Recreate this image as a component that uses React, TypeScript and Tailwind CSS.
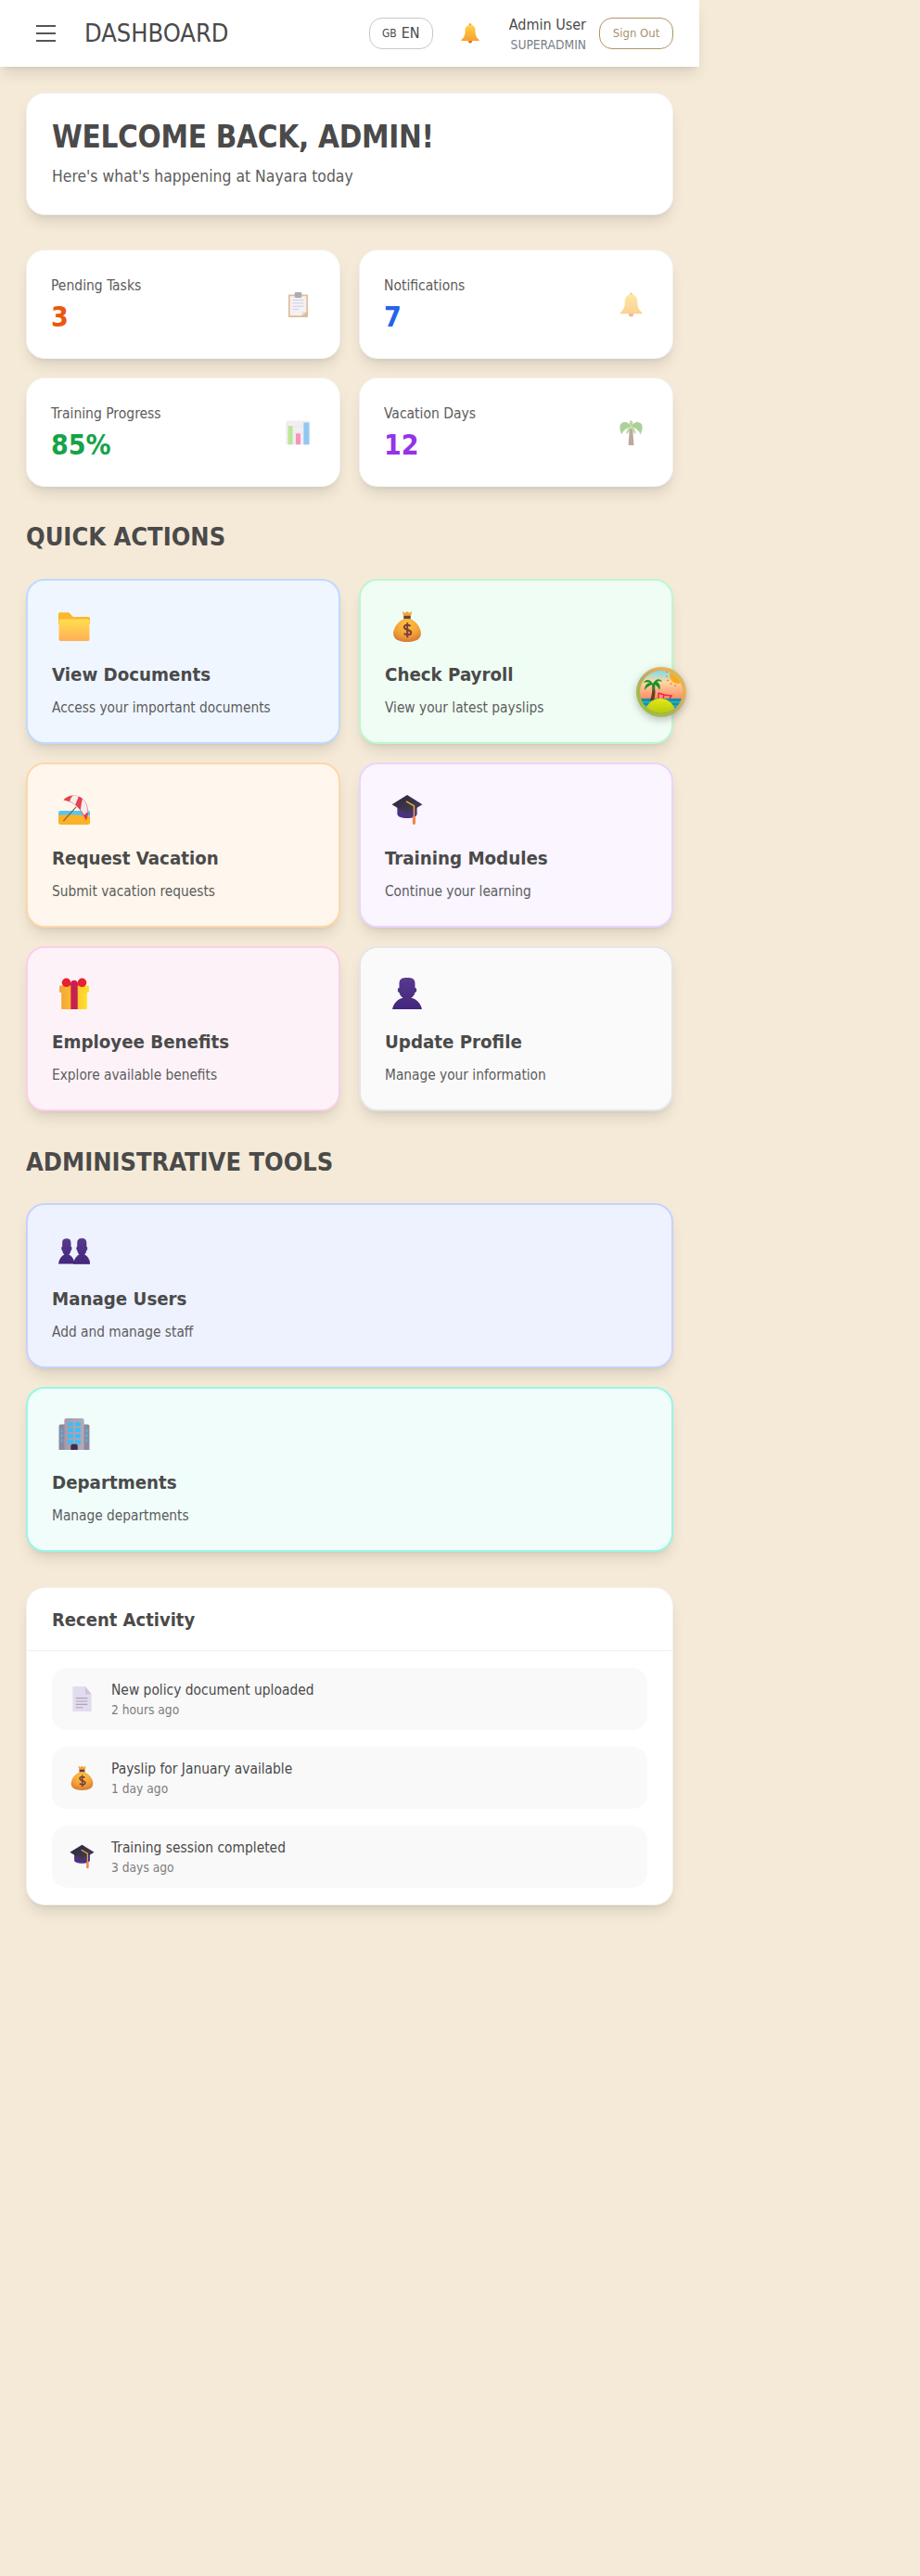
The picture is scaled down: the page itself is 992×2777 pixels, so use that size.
import { ReactNode } from "react";

const Folder = ({ className }: { className: string }) => (
  <svg viewBox="0 0 32 32" className={className}>
    <defs>
      <linearGradient id="folderFront" x1="0" y1="0" x2="0" y2="1">
        <stop offset="0" stopColor="#ffdf4f" />
        <stop offset="1" stopColor="#ffae55" />
      </linearGradient>
    </defs>
    <path d="M0 3.500a1.500 1.500 0 0 1 1.500-1.500h9l4.500 4.500h15.500a1.500 1.500 0 0 1 1.500 1.500v6H0z" fill="#ffb52f" />
    <rect x="0.500" y="9" width="31" height="22" rx="1.500" fill="url(#folderFront)" />
  </svg>
);

const MoneyBag = ({ className }: { className: string }) => (
  <svg viewBox="0 0 32 32" className={className}>
    <defs>
      <radialGradient id="bagFill" cx="0.5" cy="0.25" r="0.85">
        <stop offset="0" stopColor="#ffc53f" />
        <stop offset="0.55" stopColor="#f2a038" />
        <stop offset="1" stopColor="#d06c34" />
      </radialGradient>
    </defs>
    <path d="M11 1l3 1.500 2-1.500 2 1.500 3-1.500-1.500 5h-7z" fill="#f3a33a" />
    <rect x="12.500" y="5.500" width="7" height="3.500" fill="#6b4136" />
    <path d="M13 8.500h6c6 2.500 11 9 11 15 0 6-6 8.500-14 8.500S2 29.500 2 23.500c0-6 5-12.500 11-15z" fill="url(#bagFill)" />
    <path d="M19.500 16c-1-1.500-6.500-2-6.500 1 0 3.500 7 2 7 5.500 0 3-6 2.500-7 .8M16.200 12.500v15" fill="none" stroke="#7a3f3c" strokeWidth="1.900" />
  </svg>
);

const Umbrella = ({ className }: { className: string }) => (
  <svg viewBox="0 0 32 32" className={className}>
    <path d="M0 19a2 2 0 0 1 2-2h28a2 2 0 0 1 2 2v3H0z" fill="#5cc4ee" />
    <path d="M0 21.500c10-.5 22-.5 32 1V29a2 2 0 0 1-2 2H2a2 2 0 0 1-2-2z" fill="#fbb226" />
    <path d="M5 27.500L18 13" stroke="#7a5a4c" strokeWidth="1" />
    <path d="M5 6C10 0 20 0 25 5c5 5 7 14 3 22-3-7-6-12-11-16C13 8 9 7 5 6z" fill="#e8414f" />
    <path d="M11.500 7.500C12 5 13.500 2.500 15.500 1.500c2 .1 3.500.5 5 1.200L17 11c-1.800-1.500-3.500-2.700-5.500-3.500z" fill="#f6eeee" />
    <path d="M22.500 16c.5-4 1-8 2-11.500 3 3 5 8 5.300 13.500l-3.800 3.500c-1-2-2.300-4-3.500-5.500z" fill="#f6eeee" />
  </svg>
);

const GradCap = ({ className }: { className: string }) => (
  <svg viewBox="0 0 32 32" className={className}>
    <defs>
      <linearGradient id="capTop" x1="0" y1="0" x2="1" y2="1">
        <stop offset="0" stopColor="#2b2438" />
        <stop offset="1" stopColor="#4a4258" />
      </linearGradient>
    </defs>
    <path d="M6 13v7c0 3 4 4.500 10 4.500s10-1.500 10-4.500v-7z" fill="#4b3280" />
    <path d="M16 1L31.500 10.500 16 20 .5 10.500z" fill="url(#capTop)" />
    <path d="M15 7.500l8 4.500v11" fill="none" stroke="#e9a83f" strokeWidth="1.400" />
    <rect x="21.500" y="22" width="3" height="9" rx="1.500" fill="#f2854c" />
  </svg>
);

const Gift = ({ className }: { className: string }) => (
  <svg viewBox="0 0 32 32" className={className}>
    <defs>
      <linearGradient id="giftBox" x1="0" y1="0" x2="1" y2="0">
        <stop offset="0" stopColor="#f4a536" />
        <stop offset="1" stopColor="#ffe02b" />
      </linearGradient>
    </defs>
    <rect x="3" y="13" width="26" height="19" rx="1" fill="url(#giftBox)" />
    <rect x="1" y="8" width="30" height="7" rx="1" fill="url(#giftBox)" />
    <circle cx="8" cy="5" r="4.500" fill="#e8212f" />
    <circle cx="24" cy="5" r="4.500" fill="#e8212f" />
    <rect x="8" y="5" width="16" height="3" fill="#e8212f" />
    <path d="M12.500 6a3.500 3.500 0 0 1 7 0V32h-7z" fill="#c8204f" />
  </svg>
);

const bustPath = "M16 0C21 0 24 1 24 6V10L25.500 11V14L24 15C23 19 20 20.500 20 20.500C25 21 30 26 31 32H1C2 26 7 21 12 20.500C12 20.500 9 19 8 15L6.500 14V11L8 10V6C8 1 11 0 16 0Z";

const Bust = ({ className }: { className: string }) => (
  <svg viewBox="0 0 32 32" className={className}>
    <defs>
      <linearGradient id="bustFill" x1="0" y1="0" x2="0" y2="1">
        <stop offset="0" stopColor="#573a8c" />
        <stop offset="1" stopColor="#43267d" />
      </linearGradient>
    </defs>
    <path d={bustPath} fill="url(#bustFill)" />
  </svg>
);

const Busts = ({ className }: { className: string }) => (
  <svg viewBox="0 0 32 32" className={className}>
    <defs>
      <linearGradient id="bustsFill" x1="0" y1="0" x2="0" y2="1">
        <stop offset="0" stopColor="#573a8c" />
        <stop offset="1" stopColor="#43267d" />
      </linearGradient>
    </defs>
    <path d={bustPath} fill="url(#bustsFill)" transform="translate(-.5 4) scale(.55 .8)" />
    <path d={bustPath} fill="url(#bustsFill)" stroke="#351b68" strokeWidth=".8" transform="translate(15 4) scale(.55 .8)" />
  </svg>
);

const Building = ({ className }: { className: string }) => {
  const rows = [4, 10, 16, 22];
  const sideRows = [11, 16, 21];
  return (
    <svg viewBox="0 0 32 32" className={className}>
      <defs>
        <linearGradient id="towerFill" x1="0" y1="0" x2="1" y2="0">
          <stop offset="0" stopColor="#a49cad" />
          <stop offset="1" stopColor="#b1aab8" />
        </linearGradient>
      </defs>
      <path d="M.5 8a2 2 0 0 1 2-2H29.500a2 2 0 0 1 2 2v24H.5z" fill="#8f8898" />
      <path d="M6 2a2 2 0 0 1 2-2h16a2 2 0 0 1 2 2v30H6z" fill="url(#towerFill)" />
      {rows.map((y) => (
        <g key={y} fill="#3cbdf8">
          <rect x="9.500" y={y} width="5.500" height="4" />
          <rect x="17" y={y} width="5.500" height="4" />
        </g>
      ))}
      {sideRows.map((y) => (
        <g key={y} fill="#3cbdf8">
          <rect x="2.300" y={y} width="2" height="3" />
          <rect x="27.700" y={y} width="2" height="3" />
        </g>
      ))}
      <path d="M12.500 28a2 2 0 0 1 2-2h3a2 2 0 0 1 2 2v4h-7z" fill="#3d2d4f" />
    </svg>
  );
};

const Clipboard = ({ className }: { className: string }) => (
  <svg viewBox="0 0 32 32" className={className}>
    <rect x="3.500" y="3" width="25" height="29" rx="1" fill="#c77b30" />
    <path d="M5.500 5h21v20l-6 5h-15z" fill="#e9e5f1" />
    <path d="M20.500 30l6-5h-6z" fill="#c9c0d2" />
    <rect x="11.500" y="0" width="9" height="7" rx="1.500" fill="#5f5a66" />
    <path d="M9 10h14M9 14h14M9 18h14M9 22h8" stroke="#a8a2ae" strokeWidth="1.200" />
  </svg>
);

const Bell = ({ className }: { className: string }) => (
  <svg viewBox="0 0 32 32" className={className}>
    <defs>
      <linearGradient id="bellFill" x1="0" y1="0" x2="0" y2="1">
        <stop offset="0" stopColor="#fed24a" />
        <stop offset="1" stopColor="#f9a12e" />
      </linearGradient>
    </defs>
    <circle cx="16" cy="2.500" r="2" fill="#eda32c" />
    <circle cx="16" cy="28.500" r="3" fill="#e9702d" />
    <path d="M16 3c6 0 8 4 8 10 0 6 2 10 6 13v1.500H2V26c4-3 6-7 6-13C8 7 10 3 16 3z" fill="url(#bellFill)" />
  </svg>
);

const Chart = ({ className }: { className: string }) => (
  <svg viewBox="0 0 32 32" className={className}>
    <rect x="0.500" y="0.500" width="31" height="31" rx="2" fill="#e2dfe6" />
    <path d="M.5 8h31M.5 16h31M.5 24h31" stroke="#cfcbd4" strokeWidth=".6" />
    <rect x="3" y="7" width="6" height="24" rx="1" fill="#7ccf35" />
    <rect x="13" y="17" width="6" height="14" rx="1" fill="#ee2c78" />
    <rect x="23" y="3" width="7" height="28" rx="1" fill="#1f92e8" />
  </svg>
);

const Palm = ({ className }: { className: string }) => (
  <svg viewBox="0 0 32 32" className={className}>
    <path d="M14 10h4l1.500 22h-7z" fill="#80513f" />
    <path d="M16 8C12 1 5 1 2 6 1 10 2 14 4 18c2-5 6-8 12-10z" fill="#5ca13a" />
    <path d="M16 8c4-7 11-7 14-2 1 4 0 8-2 12-2-5-6-8-12-10z" fill="#5ca13a" />
    <path d="M16 8c-4 1-6 5-6 10 3-2 5-5 6-10zM16 8c4 1 6 5 6 10-3-2-5-5-6-10zM16 8c-3-3-3-6 0-8 3 2 3 5 0 8z" fill="#73b840" />
  </svg>
);

const Page = ({ className }: { className: string }) => (
  <svg viewBox="0 0 32 32" className={className}>
    <path d="M4 0h16l8 10v22H4z" fill="#e3dcee" />
    <path d="M20 0l8 10h-8z" fill="#cfc6dc" />
    <path d="M8 15h15M8 19h15M8 23h15M8 27h9" stroke="#aea4ba" strokeWidth="1.300" />
  </svg>
);

// floating badge, sits over the payroll card
const Logo = () => (
  <svg viewBox="0 0 54 54" className="absolute left-[686px] top-[719px] w-[54px] h-[54px] drop-shadow-[0_3px_4px_rgba(0,0,0,0.25)]">
    <defs>
      <linearGradient id="ring" x1="0" y1="1" x2="1" y2="0">
        <stop offset="0" stopColor="#93c824" />
        <stop offset="0.45" stopColor="#b5ad68" />
        <stop offset="0.75" stopColor="#f0ad58" />
        <stop offset="1" stopColor="#a6cf52" />
      </linearGradient>
      <linearGradient id="sky" x1="0" y1="0" x2="0" y2="1">
        <stop offset="0.08" stopColor="#7fdcec" />
        <stop offset="0.3" stopColor="#fbd9a0" />
        <stop offset="0.62" stopColor="#ff8f6a" />
      </linearGradient>
      <linearGradient id="hill" x1="0" y1="0" x2="0" y2="1">
        <stop offset="0" stopColor="#e6e812" />
        <stop offset="1" stopColor="#7aa30a" />
      </linearGradient>
      <clipPath id="inner">
        <circle cx="27" cy="27" r="23" />
      </clipPath>
    </defs>
    <circle cx="27" cy="27" r="27" fill="url(#ring)" />
    <g clipPath="url(#inner)">
      <rect width="54" height="54" fill="url(#sky)" />
      <circle cx="45" cy="9" r="9" fill="#f9a91c" />
      <path d="M32 5l2 1M32 10l2 .5M33 15l2-1M37 19l1-2M42 21l.5-2" stroke="#f47a26" strokeWidth="1.200" />
      <rect y="34" width="54" height="20" fill="#0f93a6" />
      <path d="M0 38h54M0 42h54" stroke="#5ac9d0" strokeWidth=".8" />
      <path d="M24 28v6M24 28l6 2 8 1-2 3M30 30l-1 4" fill="none" stroke="#e8264e" strokeWidth="1.500" />
      <path d="M17 18c1 6 0 12-2 18h4c2-6 2-12 0-18z" fill="#6d3c1e" />
      <path d="M18 18c-3-5-8-5-10-1 3-1 5-1 7 0-3 0-6 3-6 8 2-3 5-5 8-6 1 2 1 5 0 8 3-2 4-5 3-8 2 1 4 3 5 6 2-4 0-8-3-9 2-1 4-1 6 0-2-4-7-4-10 2z" fill="#1b8f2d" />
      <ellipse cx="26" cy="52" rx="17" ry="18" fill="url(#hill)" />
    </g>
  </svg>
);

const fontStack = "font-['DejaVu_Sans_Condensed','DejaVu_Sans',sans-serif]";
const cardShadow = "shadow-[0_10px_15px_-3px_rgba(0,0,0,0.1),0_4px_6px_-4px_rgba(0,0,0,0.1)]";

interface Stat {
  label: string;
  value: string;
  valueColor: string;
  icon: ReactNode;
}

interface Action {
  title: string;
  description: string;
  tone: string;
  icon: ReactNode;
}

const iconBig = "w-[34px] h-[34px]";
const iconStat = "w-[27px] h-[27px]";
const iconRow = "w-[27px] h-[27px]";

const stats: Stat[] = [
  { label: "Pending Tasks", value: "3", valueColor: "text-[#ea580c]", icon: <Clipboard className={iconStat} /> },
  { label: "Notifications", value: "7", valueColor: "text-[#2563eb]", icon: <Bell className={iconStat} /> },
  { label: "Training Progress", value: "85%", valueColor: "text-[#16a34a]", icon: <Chart className={iconStat} /> },
  { label: "Vacation Days", value: "12", valueColor: "text-[#9333ea]", icon: <Palm className={iconStat} /> },
];

const quickActions: Action[] = [
  { title: "View Documents", description: "Access your important documents", tone: "bg-[#eff6ff] border-[#bfdbfe]", icon: <Folder className={iconBig} /> },
  { title: "Check Payroll", description: "View your latest payslips", tone: "bg-[#f0fdf4] border-[#bbf7d0]", icon: <MoneyBag className={iconBig} /> },
  { title: "Request Vacation", description: "Submit vacation requests", tone: "bg-[#fff7ed] border-[#fed7aa]", icon: <Umbrella className={iconBig} /> },
  { title: "Training Modules", description: "Continue your learning", tone: "bg-[#faf5ff] border-[#e9d5ff]", icon: <GradCap className={iconBig} /> },
  { title: "Employee Benefits", description: "Explore available benefits", tone: "bg-[#fdf2f8] border-[#fbcfe8]", icon: <Gift className={iconBig} /> },
  { title: "Update Profile", description: "Manage your information", tone: "bg-[#fafafa] border-[#e5e5e5]", icon: <Bust className={iconBig} /> },
];

const adminTools: Action[] = [
  { title: "Manage Users", description: "Add and manage staff", tone: "bg-[#eef2ff] border-[#c7d2fe]", icon: <Busts className={iconBig} /> },
  { title: "Departments", description: "Manage departments", tone: "bg-[#f0fdfa] border-[#99f6e4]", icon: <Building className={iconBig} /> },
];

const activity = [
  { text: "New policy document uploaded", time: "2 hours ago", icon: <Page className={iconRow} /> },
  { text: "Payslip for January available", time: "1 day ago", icon: <MoneyBag className={iconRow} /> },
  { text: "Training session completed", time: "3 days ago", icon: <GradCap className={iconRow} /> },
];

const ActionCard = ({ action }: { action: Action }) => (
  <div className={`rounded-[20px] border-2 px-[26px] pt-[26px] pb-[25px] ${cardShadow} ${action.tone}`}>
    <div className="w-[47px] h-[46px] flex items-center justify-center">{action.icon}</div>
    <h3 className="mt-[15px] text-[20.300px] leading-[28px] font-bold text-[#4a4a4a]">{action.title}</h3>
    <p className="mt-[10px] text-[15.300px] leading-[24px] text-[#5c5c5c]">{action.description}</p>
  </div>
);

const App = () => {
  return (
    <div className={`relative min-h-[2777px] bg-[#f5ead7] ${fontStack}`}>
      <header className={`w-[754px] h-[72px] bg-white flex items-center pl-[39px] pr-[28px] ${cardShadow}`}>
        <div className="w-[21px] flex flex-col gap-[6px]">
          <span className="h-[2px] bg-[#555555]" />
          <span className="h-[2px] bg-[#555555]" />
          <span className="h-[2px] bg-[#555555]" />
        </div>
        <h1 className="ml-[31px] text-[27px] text-[#4a4a4a]">DASHBOARD</h1>
        <button className="ml-auto w-[69px] h-[34px] rounded-[14px] border border-[#c8c8c8] flex items-center justify-center gap-[5px] text-[16px] text-[#4a4a4a]">
          <span className="text-[12px] font-medium">GB</span>
          EN
        </button>
        <Bell className="ml-[29px] w-[22px] h-[22px]" />
        <div className="ml-[31px] text-right">
          <p className="text-[16px] leading-[24px] text-[#4a4a4a]">Admin User</p>
          <p className="text-[13.700px] leading-[18px] text-[#7a7f8a]">SUPERADMIN</p>
        </div>
        <button className="ml-[14px] w-[80px] h-[34px] rounded-[14px] border border-[#b09368] text-[13px] text-[#a8916f]">
          Sign Out
        </button>
      </header>

      <main className="w-[754px] px-[28px] pt-[28px]">
        <section className={`h-[132px] rounded-[20px] bg-white border border-[#f1f1f1] px-[27px] pt-[27px] ${cardShadow}`}>
          <h2 className="text-[33px] leading-[40px] tracking-[-0.3px] font-bold text-[#4a4a4a]">WELCOME BACK, ADMIN!</h2>
          <p className="mt-[8px] text-[17.400px] leading-[28px] text-[#5c5c5c]">Here's what's happening at Nayara today</p>
        </section>

        <section className="mt-[37px] grid grid-cols-2 gap-[20px]">
          {stats.map((stat) => (
            <div key={stat.label} className={`rounded-[20px] bg-white border border-[#f1f1f1] p-[26px] flex items-center justify-between ${cardShadow}`}>
              <div>
                <p className="text-[15.500px] leading-[24px] text-[#5c5c5c]">{stat.label}</p>
                <p className={`mt-[4px] text-[30px] leading-[36px] font-bold ${stat.valueColor}`}>{stat.value}</p>
              </div>
              <div className="mr-[5px] opacity-50">{stat.icon}</div>
            </div>
          ))}
        </section>

        <h2 className="mt-[36px] text-[27px] leading-[36px] font-bold text-[#4a4a4a]">QUICK ACTIONS</h2>
        <section className="mt-[27px] grid grid-cols-2 gap-[20px]">
          {quickActions.map((action) => (
            <ActionCard key={action.title} action={action} />
          ))}
        </section>

        <h2 className="mt-[37px] text-[27px] leading-[36px] font-bold text-[#4a4a4a]">ADMINISTRATIVE TOOLS</h2>
        <section className="mt-[26px] flex flex-col gap-[20px]">
          {adminTools.map((action) => (
            <ActionCard key={action.title} action={action} />
          ))}
        </section>

        <section className={`mt-[38px] rounded-[20px] bg-white border border-[#f1f1f1] ${cardShadow}`}>
          <h3 className="h-[68px] px-[27px] flex items-center border-b border-[#f0f0f0] text-[20px] font-bold text-[#4a4a4a]">Recent Activity</h3>
          <div className="px-[27px] py-[18px] flex flex-col gap-[18px]">
            {activity.map((item) => (
              <div key={item.text} className="h-[67px] rounded-[16px] bg-[#f9f9f9] flex items-center px-[18px] gap-[18px]">
                <div className="w-[28px] flex justify-center">{item.icon}</div>
                <div>
                  <p className="text-[15.400px] leading-[22px] text-[#4a4a4a]">{item.text}</p>
                  <p className="text-[13.700px] leading-[20px] text-[#7d7d7d]">{item.time}</p>
                </div>
              </div>
            ))}
          </div>
        </section>
      </main>

      <Logo />
    </div>
  );
};

export default App;
